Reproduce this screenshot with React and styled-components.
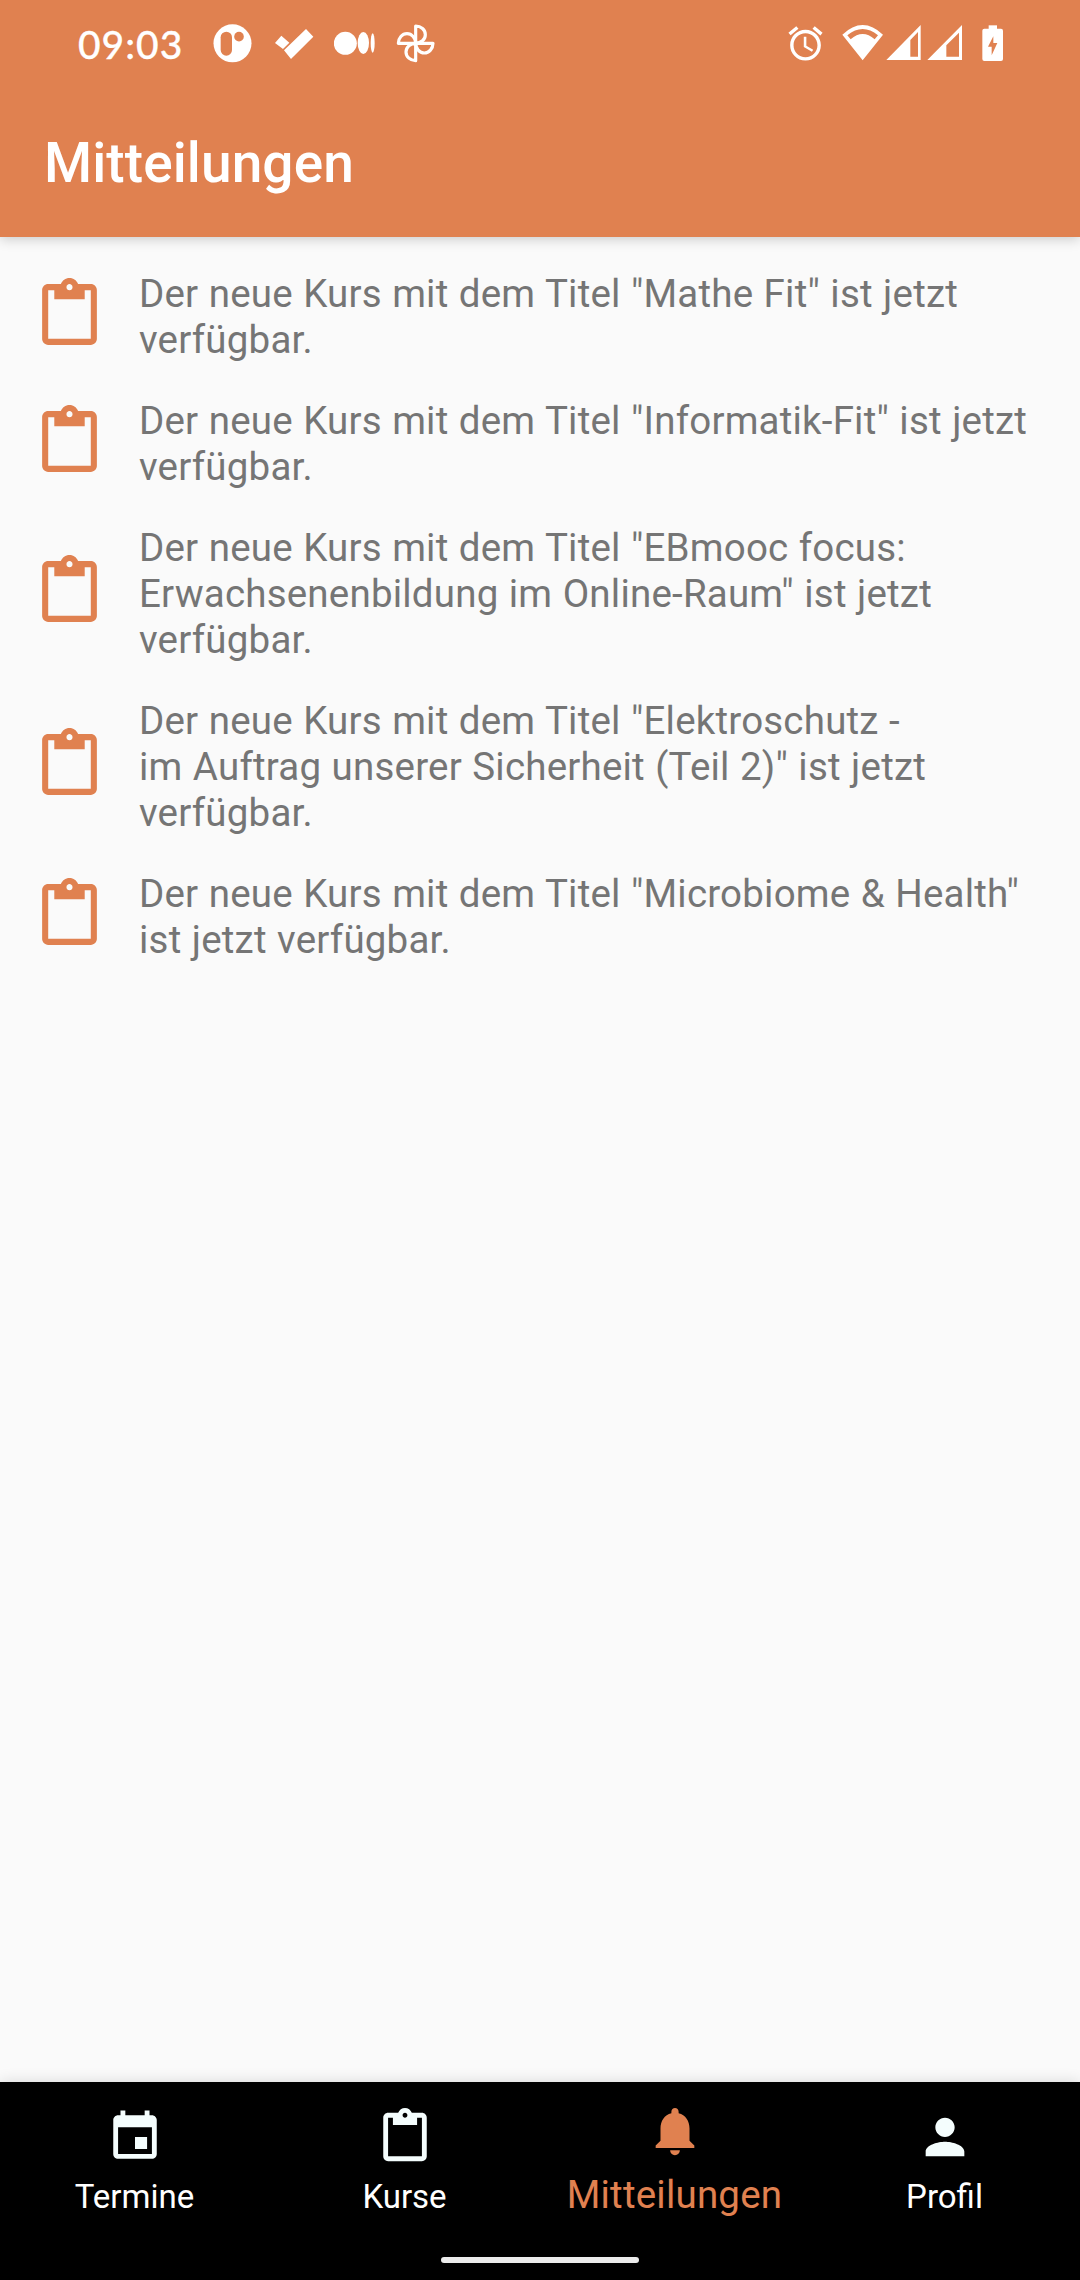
import React from 'react'
import styled, { createGlobalStyle } from 'styled-components'

const ORANGE = '#e08150'
const AZURE = '#f4fdfd'

const GlobalStyle = createGlobalStyle`
  body {
    margin: 0;
    background-color: #fafafa;
    font-family: Roboto, sans-serif;
  }
`

const Screen = styled.div`
  display: flex;
  flex-direction: column;
  width: 1080px;
  height: 2280px;
  background-color: #fafafa;
  overflow: hidden;
`

const Header = styled.header`
  height: 237px;
  flex: none;
  background-color: ${ORANGE};
  color: white;
  box-shadow: 0 2px 12px 0 rgba(0, 0, 0, 0.2);
`

const StatusBar = styled.div`
  display: flex;
  align-items: center;
  box-sizing: border-box;
  height: 86px;
  padding: 0 76px 0 78px;
`

const Clock = styled.div`
  width: 134px;
  padding-top: 2px;
  font-family: Lato, sans-serif;
  font-size: 39px;
  font-weight: 500;
  line-height: 40px;
  letter-spacing: 1px;
  -webkit-text-stroke: 0.3px white;
`

const AppIcons = styled.div`
  display: flex;
  gap: 19px;
`

const SystemIcons = styled.div`
  display: flex;
  align-items: center;
  margin-left: auto;
`

const StatusIcon = styled.svg`
  display: block;
  width: ${({ $width }) => $width}px;
  height: ${({ $height }) => $height || 40}px;
  margin-left: ${({ $gap }) => $gap || 0}px;
  fill: white;
`

const Title = styled.h1`
  margin: 0;
  padding: 45px 44px 0;
  font-size: 55px;
  font-weight: 500;
  line-height: 64px;
  letter-spacing: 0.1px;
`

const List = styled.ul`
  flex: 1;
  margin: 0;
  padding: 34px 0 0;
  list-style: none;
`

const Item = styled.li`
  display: flex;
  align-items: center;
  margin-bottom: 35px;
`

const ItemIcon = styled.svg`
  flex: none;
  width: 73px;
  height: 73px;
  margin: 0 33px 5px;
  fill: ${ORANGE};
`

const ItemText = styled.div`
  color: #757575;
  font-size: 38.5px;
  line-height: 46px;
  letter-spacing: 0.2px;
  word-spacing: 0.6px;
  white-space: pre-line;
`

const BottomBar = styled.footer`
  flex: none;
  height: 198px;
  background-color: black;
  box-shadow: 0 0 14px 0 rgba(0, 0, 0, 0.14);
`

const Tabs = styled.nav`
  display: flex;
  height: 175px;
`

const Tab = styled.div`
  display: flex;
  flex: 1 1 0;
  flex-direction: column;
  align-items: center;
  padding-top: ${({ $active }) => ($active ? 20 : 26)}px;
  color: ${({ $active }) => ($active ? ORANGE : 'white')};
  fill: ${({ $active }) => ($active ? ORANGE : AZURE)};
`

const TabIcon = styled.svg`
  width: 58px;
  height: 58px;
`

const TabLabel = styled.span`
  margin: ${({ $active }) => ($active ? 15 : 11)}px 1px 0 0;
  font-size: ${({ $active }) => ($active ? 38.5 : 33)}px;
  line-height: 40px;
  letter-spacing: ${({ $active }) => ($active ? '0.2px' : 'normal')};
`

const GestureHandle = styled.div`
  width: 198px;
  height: 6px;
  margin: 0 auto;
  border-radius: 3px;
  background-color: #ebebeb;
`

const ICONS = {
  clipboard:
    'M19 2h-4.18C14.4.84 13.3 0 12 0c-1.3 0-2.4.84-2.82 2H5c-1.1 0-2 .9-2 2v16c0 1.1.9 2 2 2h14c1.1 0 2-.9 2-2V4c0-1.1-.9-2-2-2zm-7 0c.55 0 1 .45 1 1s-.45 1-1 1-1-.45-1-1 .45-1 1-1zm7 18H5V4h2v3h10V4h2v16z',
  event:
    'M17 12h-5v5h5v-5zM16 1v2H8V1H6v2H5c-1.11 0-1.99.9-1.99 2L3 19c0 1.1.89 2 2 2h14c1.1 0 2-.9 2-2V5c0-1.1-.9-2-2-2h-1V1h-2zm3 18H5V8h14v11z',
  bell:
    'M12 22c1.1 0 2-.9 2-2h-4c0 1.1.89 2 2 2zm6-6v-5c0-3.07-1.64-5.64-4.5-6.32V4c0-.83-.67-1.5-1.5-1.5s-1.5.67-1.5 1.5v.68C7.63 5.36 6 7.92 6 11v5l-2 2v1h16v-1l-2-2z',
  person:
    'M12 12c2.21 0 4-1.79 4-4s-1.79-4-4-4-4 1.79-4 4 1.79 4 4 4zm0 2c-2.67 0-8 1.34-8 4v2h16v-2c0-2.66-5.33-4-8-4z',
  alarm:
    'M22 5.72l-4.6-3.86-1.29 1.53 4.6 3.86L22 5.72zM7.88 3.39L6.6 1.86 2 5.71l1.29 1.53 4.59-3.85zM12.5 8H11v6l4.75 2.85.75-1.23-4-2.37V8zM12 4c-4.97 0-9 4.03-9 9s4.02 9 9 9c4.97 0 9-4.03 9-9s-4.03-9-9-9zm0 16c-3.87 0-7-3.13-7-7s3.13-7 7-7 7 3.13 7 7-3.13 7-7 7z',
}

const MESSAGES = [
  'Der neue Kurs mit dem Titel "Mathe Fit" ist jetzt\nverfügbar.',
  'Der neue Kurs mit dem Titel "Informatik-Fit" ist jetzt\nverfügbar.',
  'Der neue Kurs mit dem Titel "EBmooc focus:\nErwachsenenbildung im Online-Raum" ist jetzt\nverfügbar.',
  'Der neue Kurs mit dem Titel "Elektroschutz -\nim Auftrag unserer Sicherheit (Teil 2)" ist jetzt\nverfügbar.',
  'Der neue Kurs mit dem Titel "Microbiome & Health"\nist jetzt verfügbar.',
]

const TABS = [
  { label: 'Termine', icon: 'event' },
  { label: 'Kurse', icon: 'clipboard' },
  { label: 'Mitteilungen', icon: 'bell', active: true },
  { label: 'Profil', icon: 'person' },
]

const PETALS = [0, 90, 180, 270]

const Status = () => (
  <StatusBar>
    <Clock>09:03</Clock>
    <AppIcons>
      <StatusIcon $width={42} viewBox="0 0 126 120">
        <circle cx="61.5" cy="61" r="57" />
        <rect x="26" y="26" width="34" height="72" rx="17" fill={ORANGE} />
        <circle cx="81" cy="41" r="14.5" fill={ORANGE} />
      </StatusIcon>
      <StatusIcon $width={42} viewBox="0 0 126 120">
        <path d="M25 38L49 59L30 78L6 60ZM33 82L99 18L121 41L54 108Z" />
      </StatusIcon>
      <StatusIcon $width={42} viewBox="0 0 126 120">
        <circle cx="34" cy="61" r="34.5" />
        <ellipse cx="88" cy="60" rx="17" ry="33" />
        <ellipse cx="116" cy="60" rx="6" ry="29" />
      </StatusIcon>
      <StatusIcon $width={42} viewBox="0 0 126 120">
        {PETALS.map(angle => (
          <path
            key={angle}
            d="M62 61V9A29 26 0 0 1 62 61"
            transform={`rotate(${angle} 62 61)`}
            fill="none"
            stroke="white"
            strokeWidth="9.5"
            strokeLinejoin="round"
          />
        ))}
      </StatusIcon>
    </AppIcons>
    <SystemIcons>
      <StatusIcon $width={41} $height={41} viewBox="0 0 24 24">
        <path d={ICONS.alarm} />
      </StatusIcon>
      <StatusIcon $width={42} $gap={16} viewBox="0 0 126 120">
        <path fillRule="evenodd" d="M1 35Q62 -23 123 35L62 112ZM16 37Q62 -1 108 37L98 49Q62 17 26 49Z" />
      </StatusIcon>
      <StatusIcon $width={36} $gap={2} viewBox="0 0 108 120">
        <path fillRule="evenodd" d="M1 111L104 6V111ZM96 27V101H73V51Z" />
      </StatusIcon>
      <StatusIcon $width={36} $gap={5} viewBox="0 0 108 120">
        <path fillRule="evenodd" d="M1 111L105 6V111ZM96 29V101H58V67Z" />
      </StatusIcon>
      <StatusIcon $width={22} $gap={19} viewBox="0 0 66 120">
        <rect x="20" y="7" width="25" height="14" />
        <rect x="1" y="17" width="62" height="97" rx="6" />
        <path d="M34 40L18 71H29V97L46 60H34Z" fill={ORANGE} />
      </StatusIcon>
    </SystemIcons>
  </StatusBar>
)

const App = () => (
  <Screen>
    <GlobalStyle />
    <Header>
      <Status />
      <Title>Mitteilungen</Title>
    </Header>
    <List>
      {MESSAGES.map(message => (
        <Item key={message}>
          <ItemIcon viewBox="0 0 24 24">
            <path d={ICONS.clipboard} />
          </ItemIcon>
          <ItemText>{message}</ItemText>
        </Item>
      ))}
    </List>
    <BottomBar>
      <Tabs>
        {TABS.map(({ label, icon, active }) => (
          <Tab key={label} $active={active}>
            <TabIcon viewBox="0 0 24 24">
              <path d={ICONS[icon]} />
            </TabIcon>
            <TabLabel $active={active}>{label}</TabLabel>
          </Tab>
        ))}
      </Tabs>
      <GestureHandle />
    </BottomBar>
  </Screen>
)

export default App
